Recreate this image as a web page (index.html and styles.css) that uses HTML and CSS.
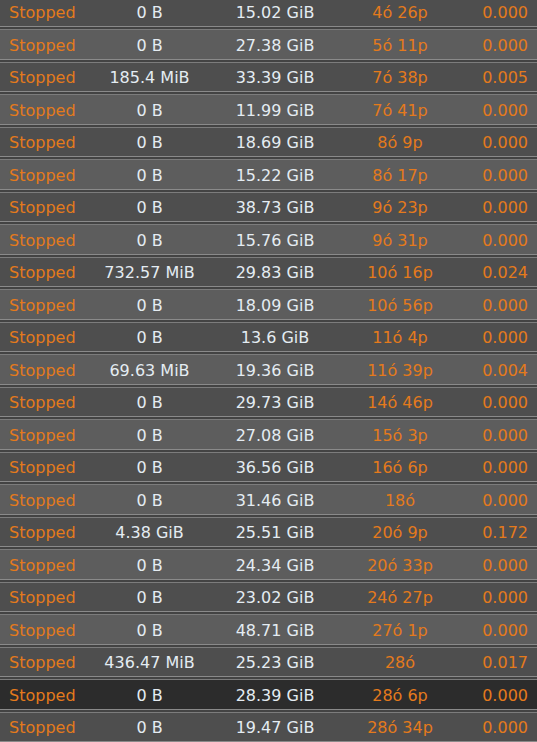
FILE: index.html
```html
<!DOCTYPE html>
<html lang="hu">
<head>
<meta charset="UTF-8">
<meta name="viewport" content="width=device-width, initial-scale=1.0">
<title>Torrents</title>
<link rel="stylesheet" href="styles.css">
</head>
<body>
<div class="list">
    <div class="row"><span class="status">Stopped</span><span class="size">0 B</span><span class="size">15.02 GiB</span><span class="age">4ó 26p</span><span class="ratio">0.000</span></div>
    <div class="row"><span class="status">Stopped</span><span class="size">0 B</span><span class="size">27.38 GiB</span><span class="age">5ó 11p</span><span class="ratio">0.000</span></div>
    <div class="row"><span class="status">Stopped</span><span class="size">185.4 MiB</span><span class="size">33.39 GiB</span><span class="age">7ó 38p</span><span class="ratio">0.005</span></div>
    <div class="row"><span class="status">Stopped</span><span class="size">0 B</span><span class="size">11.99 GiB</span><span class="age">7ó 41p</span><span class="ratio">0.000</span></div>
    <div class="row"><span class="status">Stopped</span><span class="size">0 B</span><span class="size">18.69 GiB</span><span class="age">8ó 9p</span><span class="ratio">0.000</span></div>
    <div class="row"><span class="status">Stopped</span><span class="size">0 B</span><span class="size">15.22 GiB</span><span class="age">8ó 17p</span><span class="ratio">0.000</span></div>
    <div class="row"><span class="status">Stopped</span><span class="size">0 B</span><span class="size">38.73 GiB</span><span class="age">9ó 23p</span><span class="ratio">0.000</span></div>
    <div class="row"><span class="status">Stopped</span><span class="size">0 B</span><span class="size">15.76 GiB</span><span class="age">9ó 31p</span><span class="ratio">0.000</span></div>
    <div class="row"><span class="status">Stopped</span><span class="size">732.57 MiB</span><span class="size">29.83 GiB</span><span class="age">10ó 16p</span><span class="ratio">0.024</span></div>
    <div class="row"><span class="status">Stopped</span><span class="size">0 B</span><span class="size">18.09 GiB</span><span class="age">10ó 56p</span><span class="ratio">0.000</span></div>
    <div class="row"><span class="status">Stopped</span><span class="size">0 B</span><span class="size">13.6 GiB</span><span class="age">11ó 4p</span><span class="ratio">0.000</span></div>
    <div class="row"><span class="status">Stopped</span><span class="size">69.63 MiB</span><span class="size">19.36 GiB</span><span class="age">11ó 39p</span><span class="ratio">0.004</span></div>
    <div class="row"><span class="status">Stopped</span><span class="size">0 B</span><span class="size">29.73 GiB</span><span class="age">14ó 46p</span><span class="ratio">0.000</span></div>
    <div class="row"><span class="status">Stopped</span><span class="size">0 B</span><span class="size">27.08 GiB</span><span class="age">15ó 3p</span><span class="ratio">0.000</span></div>
    <div class="row"><span class="status">Stopped</span><span class="size">0 B</span><span class="size">36.56 GiB</span><span class="age">16ó 6p</span><span class="ratio">0.000</span></div>
    <div class="row"><span class="status">Stopped</span><span class="size">0 B</span><span class="size">31.46 GiB</span><span class="age">18ó</span><span class="ratio">0.000</span></div>
    <div class="row"><span class="status">Stopped</span><span class="size">4.38 GiB</span><span class="size">25.51 GiB</span><span class="age">20ó 9p</span><span class="ratio">0.172</span></div>
    <div class="row"><span class="status">Stopped</span><span class="size">0 B</span><span class="size">24.34 GiB</span><span class="age">20ó 33p</span><span class="ratio">0.000</span></div>
    <div class="row"><span class="status">Stopped</span><span class="size">0 B</span><span class="size">23.02 GiB</span><span class="age">24ó 27p</span><span class="ratio">0.000</span></div>
    <div class="row"><span class="status">Stopped</span><span class="size">0 B</span><span class="size">48.71 GiB</span><span class="age">27ó 1p</span><span class="ratio">0.000</span></div>
    <div class="row"><span class="status">Stopped</span><span class="size">436.47 MiB</span><span class="size">25.23 GiB</span><span class="age">28ó</span><span class="ratio">0.017</span></div>
    <div class="row selected"><span class="status">Stopped</span><span class="size">0 B</span><span class="size">28.39 GiB</span><span class="age">28ó 6p</span><span class="ratio">0.000</span></div>
    <div class="row"><span class="status">Stopped</span><span class="size">0 B</span><span class="size">19.47 GiB</span><span class="age">28ó 34p</span><span class="ratio">0.000</span></div>
</div>
</body>
</html>
```

FILE: styles.css
```css
body {
  margin: 0;
  background-color: #434343;
  font-family: 'DejaVu Sans', Verdana, sans-serif;
  font-size: 16px;
  overflow: hidden;
}
.list {
  display: flex;
  flex-direction: column;
  gap: 2px;
  margin-top: -3.5px;
}
.row {
  display: grid;
  grid-template-columns: 96px 107px 144px 106px 84px;
  align-items: center;
  height: 30.5px;
  padding-top: 2px;
  box-sizing: border-box;
  border-top: 1px solid #7c7c7c;
  border-bottom: 1px solid #8a8a8a;
  background-color: #4e4e4e;
}
.row:nth-child(even) {
  background-color: #5d5d5d;
}
.row.selected {
  background-color: #2c2c2c;
}
.status {
  color: #e47a1c;
  padding-left: 9px;
}
.size {
  color: #e4ecf2;
  text-align: center;
}
.age {
  color: #e47a1c;
  text-align: center;
}
.ratio {
  color: #e47a1c;
  text-align: right;
  padding-right: 9px;
}
```
